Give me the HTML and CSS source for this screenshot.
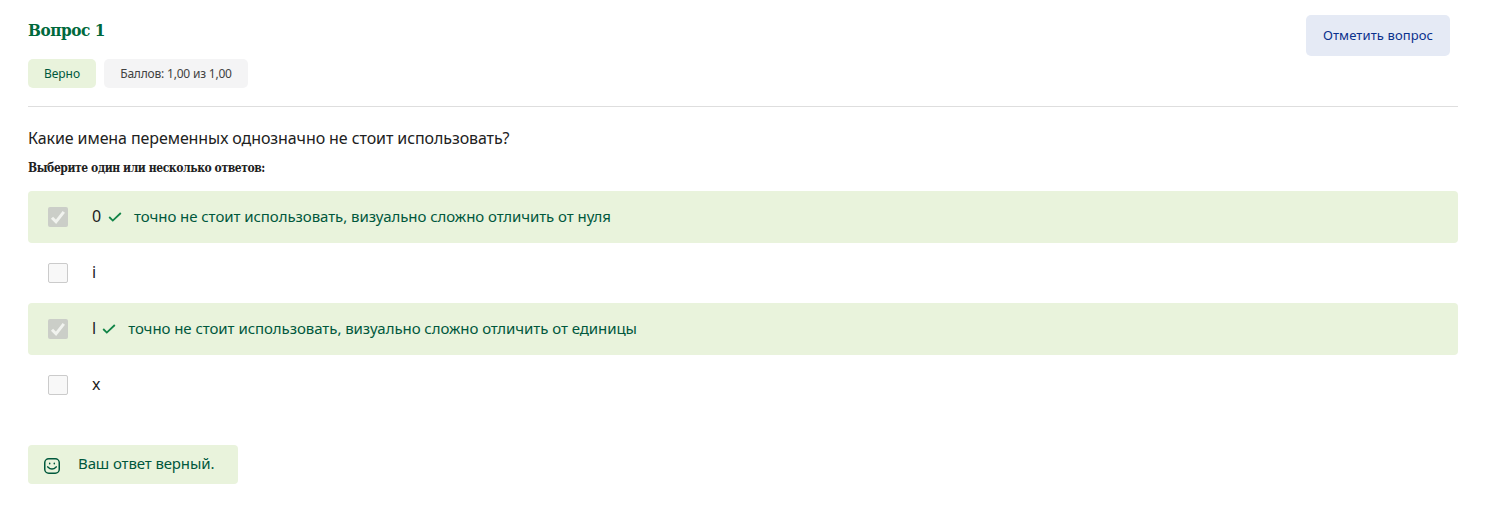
FILE: index.html
```html
<!DOCTYPE html>
<html lang="ru">
<head>
<meta charset="utf-8">
<title>Вопрос 1</title>
<link rel="stylesheet" href="styles.css">
</head>
<body>
<main class="question">
  <header class="header">
    <div class="info">
      <h1 class="title">Вопрос 1</h1>
      <div class="badges">
        <span class="badge badge-correct">Верно</span>
        <span class="badge badge-grade">Баллов: 1,00 из 1,00</span>
      </div>
    </div>
    <button class="flag" type="button">Отметить вопрос</button>
  </header>
  <p class="text">Какие имена переменных однозначно не стоит использовать?</p>
  <p class="prompt">Выберите один или несколько ответов:</p>
  <div class="answers">
    <div class="answer correct">
      <span class="box checked"><svg viewBox="0 0 20 20"><path d="M4 10.8 8 14.8 15.8 4.8"/></svg></span>
      <span class="option digit">0</span>
      <svg class="tick" viewBox="0 0 14 12"><path d="M1.2 6 4.8 9.6 12.8 2"/></svg>
      <span class="comment">точно не стоит использовать, визуально сложно отличить от нуля</span>
    </div>
    <div class="answer">
      <span class="box"></span>
      <span class="option">i</span>
    </div>
    <div class="answer correct">
      <span class="box checked"><svg viewBox="0 0 20 20"><path d="M4 10.8 8 14.8 15.8 4.8"/></svg></span>
      <span class="option">l</span>
      <svg class="tick" viewBox="0 0 14 12"><path d="M1.2 6 4.8 9.6 12.8 2"/></svg>
      <span class="comment">точно не стоит использовать, визуально сложно отличить от единицы</span>
    </div>
    <div class="answer">
      <span class="box"></span>
      <span class="option">x</span>
    </div>
  </div>
  <div class="feedback">
    <svg class="smile" viewBox="0 0 16 16"><rect x=".75" y=".75" width="14.5" height="14.5" rx="4"/><path d="M3.8 8.9Q8 13.2 12.2 8.9"/><path d="M5.7 5.3v.5M10.3 5.3v.5"/></svg>
    <span class="feedback-text">Ваш ответ верный.</span>
  </div>
</main>
</body>
</html>
```
FILE: styles.css
```css
* { box-sizing: border-box; }
body { margin: 0; background: #fff; color: #212121; font-family: "Noto Sans", sans-serif; }
.question { padding: 15px 30px 0 28px; }
.header { display: flex; justify-content: space-between; align-items: flex-start; height: 92px; padding-right: 8px; border-bottom: 1px solid #dedede; }
.title { margin: 0; height: 30px; line-height: 30px; color: #00693c; font-family: "DejaVu Serif Condensed", "DejaVu Serif", serif; font-stretch: condensed; font-size: 17px; font-weight: 700; letter-spacing: -.45px; white-space: nowrap; }
.badges { display: flex; gap: 8px; margin-top: 14px; }
.badge { display: flex; align-items: center; justify-content: center; height: 29px; padding-bottom: 1px; border-radius: 5px; font-size: 12px; white-space: nowrap; }
.badge-correct { width: 68px; background: #e9f3dc; color: #00583c; }
.badge-grade { width: 144px; background: #f4f4f5; color: #424242; letter-spacing: -.2px; }
.flag { width: 144px; height: 41px; padding: 0 0 2px; border: 0; border-radius: 5px; background: #e5eaf5; color: #0a318d; font: 13px "Noto Sans", sans-serif; letter-spacing: .1px; white-space: nowrap; }
.text { margin: 19px 0 0; height: 24px; line-height: 24px; font-size: 16px; letter-spacing: -.09px; white-space: nowrap; }
.prompt { margin: 8px 0 0; height: 20px; line-height: 20px; font-family: "DejaVu Serif Condensed", "DejaVu Serif", serif; font-stretch: condensed; font-size: 12px; font-weight: 700; letter-spacing: -.42px; white-space: nowrap; }
.answers { display: grid; gap: 4px; margin-top: 13px; }
.answer { display: flex; align-items: center; height: 52px; padding-left: 20px; border-radius: 4px; }
.correct { background: #e9f3dc; }
.box { width: 20px; height: 20px; margin-right: 24px; border: 1px solid #cbcbcb; border-radius: 2px; background: #f8f8f8; }
.checked { border: 0; background: #cbcec8; }
.checked svg { display: block; width: 20px; height: 20px; fill: none; stroke: #f1f3ef; stroke-width: 3; }
.option { padding-bottom: 2px; font-size: 16px; }
.digit { min-width: 10px; }
.tick { width: 14px; height: 12px; margin: 0 12px 0 6px; fill: none; stroke: #118447; stroke-width: 1.8; }
.comment { padding-bottom: 2px; color: #00583c; font-size: 15px; letter-spacing: -.06px; white-space: nowrap; }
.feedback { display: flex; align-items: center; gap: 18px; width: 210px; height: 39px; margin-top: 34px; padding-left: 16px; border-radius: 4px; background: #e9f3dc; color: #00583c; font-size: 15px; white-space: nowrap; }
.feedback-text { padding-bottom: 3px; letter-spacing: -.12px; }
.smile { width: 16px; height: 16px; margin-top: 3px; fill: none; stroke: #00583c; stroke-width: 1.5; stroke-linecap: round; }
```
